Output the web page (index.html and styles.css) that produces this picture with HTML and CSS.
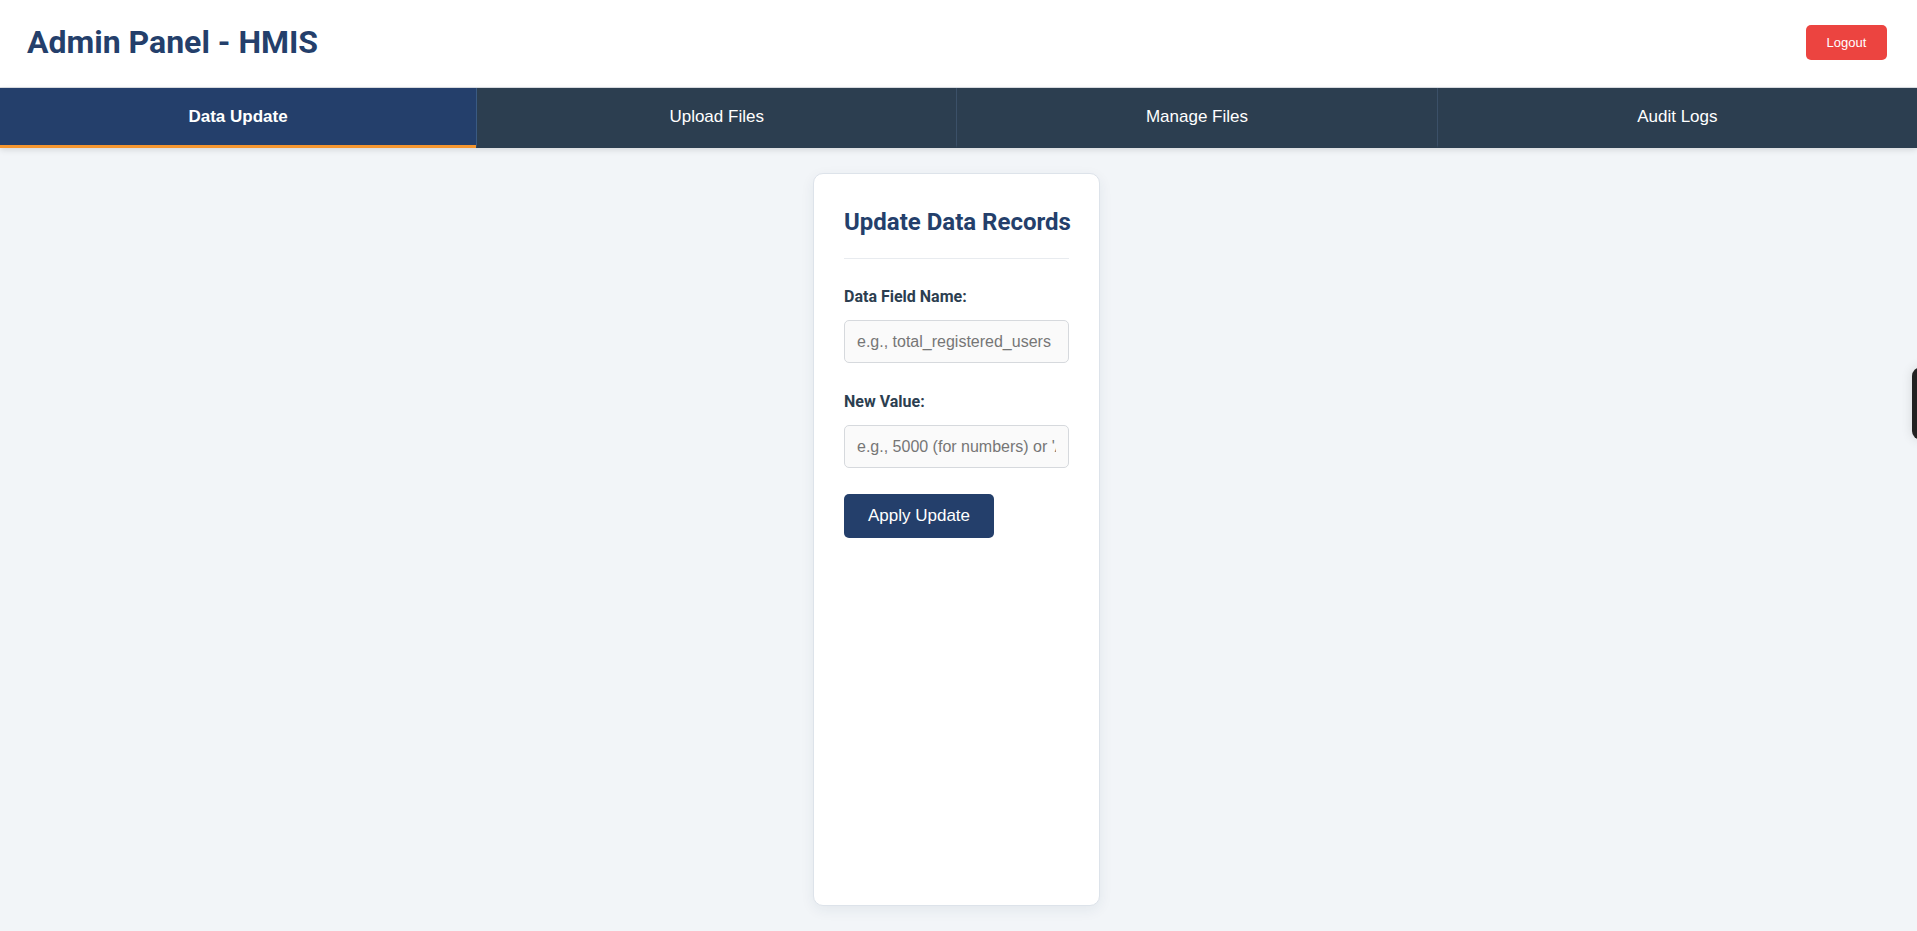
FILE: index.html
```html
<!DOCTYPE html>
<html lang="en">
<head>
<meta charset="utf-8">
<title>Admin Panel - HMIS</title>
<link rel="stylesheet" href="styles.css">
</head>
<body>
<header class="topbar">
  <h1 class="brand">Admin Panel - HMIS</h1>
  <button class="logout" type="button">Logout</button>
</header>
<nav class="tabs">
  <button class="tab active" type="button">Data Update</button>
  <button class="tab" type="button">Upload Files</button>
  <button class="tab" type="button">Manage Files</button>
  <button class="tab" type="button">Audit Logs</button>
</nav>
<main class="main">
  <section class="card">
    <h2 class="card-title">Update Data Records</h2>
    <div class="field">
      <label class="label" for="f1">Data Field Name:</label>
      <input class="input" id="f1" type="text" placeholder="e.g., total_registered_users">
    </div>
    <div class="field">
      <label class="label" for="f2">New Value:</label>
      <input class="input" id="f2" type="text" placeholder="e.g., 5000 (for numbers) or 'Active' (for text)">
    </div>
    <button class="apply" type="button">Apply Update</button>
  </section>
</main>
<div class="side-widget"></div>
</body>
</html>
```

FILE: styles.css
```css
* { box-sizing: border-box; }

html, body {
  margin: 0;
  padding: 0;
}

body {
  background: #f2f5f8;
  font-family: "Liberation Sans", Arial, sans-serif;
  min-height: 931px;
  overflow: hidden;
}

.topbar {
  display: flex;
  align-items: flex-start;
  justify-content: space-between;
  background: #ffffff;
  padding: 23px 30px 26px 27px;
  border-bottom: 1px solid #dcdfe4;
  height: 88px;
}

.brand {
  margin: 0;
  font-family: Roboto, "Liberation Sans", sans-serif;
  font-weight: 700;
  font-size: 32px;
  line-height: 38px;
  color: #243f6b;
}

.logout {
  margin-top: 2px;
  width: 81px;
  height: 35px;
  border: none;
  border-radius: 5px;
  background: #ec4440;
  color: #ffffff;
  font-family: "Liberation Sans", Arial, sans-serif;
  font-size: 13px;
  padding: 0;
  cursor: pointer;
}

.tabs {
  display: grid;
  grid-template-columns: 476px repeat(3, 1fr);
  background: #2c3e50;
  box-shadow: 0 2px 6px rgba(0, 0, 0, 0.12);
  position: relative;
}

.tab {
  border: none;
  border-left: 1px solid #3b5068;
  border-bottom: 3px solid transparent;
  background: #2c3e50;
  color: #ffffff;
  font-family: "Liberation Sans", Arial, sans-serif;
  font-size: 17px;
  line-height: 20px;
  padding: 19px 0 18px;
  text-align: center;
  cursor: pointer;
}

.tab:first-child { border-left: none; }

.tab.active {
  background: #243f6b;
  font-weight: 700;
  border-bottom-color: #f5962f;
}

.tab.active + .tab { border-left-color: #3a5a82; }

.main {
  display: flex;
  justify-content: center;
  padding: 25px 4px 0 0;
}

.card {
  width: 287px;
  min-height: 733px;
  background: #ffffff;
  border: 1px solid #dde3ea;
  border-radius: 10px;
  box-shadow: 0 4px 14px rgba(30, 50, 80, 0.07);
  padding: 34px 30px 30px;
}

.card-title {
  margin: 0 0 28px;
  padding-bottom: 22px;
  border-bottom: 1px solid #e8ebef;
  font-family: Roboto, "Liberation Sans", sans-serif;
  font-weight: 700;
  font-size: 24px;
  line-height: 28px;
  color: #243f6b;
  white-space: nowrap;
}

.field {
  display: flex;
  flex-direction: column;
  margin-bottom: 29px;
}

.field + .field { margin-bottom: 26px; }

.label {
  font-family: Roboto, "Liberation Sans", sans-serif;
  font-weight: 700;
  font-size: 16px;
  line-height: 19px;
  color: #2c3e50;
  margin-bottom: 14px;
}

.input {
  width: 100%;
  height: 43px;
  border: 1px solid #d6d9dd;
  border-radius: 5px;
  background: #fafafa;
  padding: 0 12px;
  font-family: "Liberation Sans", Arial, sans-serif;
  font-size: 16px;
  color: #333333;
}

.input::placeholder { color: #767676; }

.apply {
  width: 150px;
  height: 44px;
  border: none;
  border-radius: 5px;
  background: #243f6b;
  color: #ffffff;
  font-family: "Liberation Sans", Arial, sans-serif;
  font-size: 17px;
  padding: 0;
  cursor: pointer;
}

.side-widget {
  position: fixed;
  left: 1912px;
  top: 367px;
  width: 30px;
  height: 73px;
  background: #222222;
  border-radius: 9px;
  box-shadow: 0 0 12px rgba(0, 0, 0, 0.12);
}
```
